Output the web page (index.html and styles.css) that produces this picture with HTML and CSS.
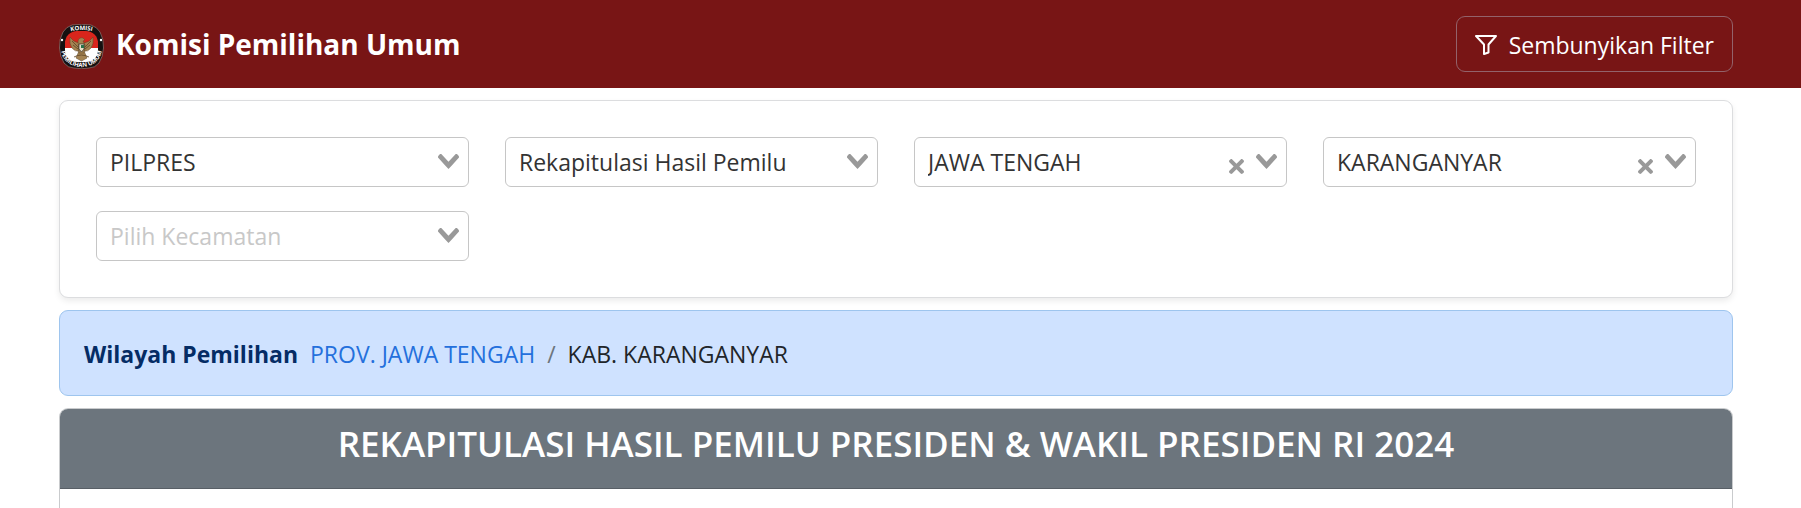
FILE: index.html
```html
<!doctype html>
<html lang="id">
<head>
    <meta charset="UTF-8">
    <meta name="viewport" content="width=device-width, initial-scale=1.0">
    <title>Komisi Pemilihan Umum</title>
    <link rel="stylesheet" href="styles.css">
</head>
<body>
    <!-- shared icons -->
    <svg class="sprite" aria-hidden="true">
        <symbol id="icon-open" viewBox="0 0 14 10">
            <path d="M9.211364 7.59931l4.48338-4.867229c.407008-.441854.407008-1.158247 0-1.60046l-.73712-.80023c-.407008-.441854-1.066904-.441854-1.474243 0L7 5.198617 2.51662.33139c-.407008-.441853-1.066904-.441853-1.474243 0l-.737121.80023c-.407008.441854-.407008 1.158248 0 1.600461l4.48338 4.867228L7 10l2.211364-2.40069z"/>
        </symbol>
        <symbol id="icon-clear" viewBox="0 0 10 10">
            <path d="M6.895455 5l2.842897-2.842898c.348864-.348863.348864-.914488 0-1.263636L9.106534.261648c-.348864-.348864-.914489-.348864-1.263636 0L5 3.104545 2.157102.261648c-.348863-.348864-.914488-.348864-1.263636 0L.261648.893466c-.348864.348864-.348864.914489 0 1.263636L3.104545 5 .261648 7.842898c-.348864.348863-.348864.914488 0 1.263636l.631818.631818c.348864.348864.914773.348864 1.263636 0L5 6.895455l2.842898 2.842897c.348863.348864.914772.348864 1.263636 0l.631818-.631818c.348864-.348864.348864-.914489 0-1.263636L6.895455 5z"/>
        </symbol>
    </svg>

    <header class="navbar">
        <a class="brand" href="#">
            <svg class="brand-logo" viewBox="0 0 45 45" aria-hidden="true">
                <defs>
                    <clipPath id="shield"><rect x="6" y="7" width="33" height="31" rx="12"/></clipPath>
                    <path id="arc-top" d="M6 9 Q22.500 3 39 9"/>
                    <path id="arc-bottom" d="M2 25 C3 49 42 49 43 25"/>
                </defs>
                <path d="M13 1 Q22.500 -.5 32 1 Q38 3 41 8 Q45 15 44.500 24 Q44 33 40 39 Q36 44 30 44 Q22.500 45.500 15 44 Q9 44 5 39 Q1 33 .5 24 Q0 15 4 8 Q7 3 13 1z" fill="#151010" stroke="#a58c84" stroke-width=".6"/>
                <g clip-path="url(#shield)">
                    <path fill="#d9251c" d="M0 0h45v24H0z"/>
                    <path fill="#fff" d="M0 24h45v21H0z"/>
                </g>
                <!-- garuda -->
                <g fill="#a48352" stroke="#5d4426" stroke-width=".5">
                    <path d="M20 19 Q14 18 11 13 Q10 20 13 24 Q16 28 20 27z"/>
                    <path d="M25 19 Q31 18 34 13 Q35 20 32 24 Q29 28 25 27z"/>
                    <path d="M20 27 L17 34 L22.500 37 L28 34 L25 27z"/>
                    <path d="M19 17 Q20 13 24 14 L26 16 L24 17 L26 21 L25 29 H20z"/>
                </g>
                <path d="M13 17l6 6M14 21l5 4M32 17l-6 6M31 21l-5 4M15 33q7-4 15 0" fill="none" stroke="#5d4426" stroke-width=".8"/>
                <path d="M20 20h5v5l-2.500 3-2.500-3z" fill="#e7dcc4" stroke="#222" stroke-width=".6"/>
                <path d="M22 21h3v3h-3z" fill="#28724b"/>
                <circle cx="3" cy="16" r="1.200" fill="#fff"/>
                <circle cx="42" cy="16" r="1.200" fill="#fff"/>
                <text class="logo-text"><textPath href="#arc-top" startOffset="50%">KOMISI</textPath></text>
                <text class="logo-text"><textPath href="#arc-bottom" startOffset="50%">PEMILIHAN UMUM</textPath></text>
            </svg>
            <span>Komisi Pemilihan Umum</span>
        </a>
        <button class="btn-filter" type="button">
            <svg class="icon-funnel" viewBox="0 0 22 20" aria-hidden="true">
                <path d="M1 1H21L13.500 9.500V17.500L9 19V9.500z"/>
            </svg>
            <span>Sembunyikan Filter</span>
        </button>
    </header>

    <main class="container">
        <form class="card filters">
            <div class="field">
                <select aria-label="Jenis pemilihan">
                    <option>PILPRES</option>
                </select>
                <svg class="icon-open"><use href="#icon-open"/></svg>
            </div>
            <div class="field">
                <select aria-label="Jenis data">
                    <option>Rekapitulasi Hasil Pemilu</option>
                </select>
                <svg class="icon-open"><use href="#icon-open"/></svg>
            </div>
            <div class="field">
                <select aria-label="Provinsi">
                    <option>JAWA TENGAH</option>
                </select>
                <button class="btn-clear" type="button" aria-label="Hapus provinsi"><svg><use href="#icon-clear"/></svg></button>
                <svg class="icon-open"><use href="#icon-open"/></svg>
            </div>
            <div class="field">
                <select aria-label="Kabupaten/Kota">
                    <option>KARANGANYAR</option>
                </select>
                <button class="btn-clear" type="button" aria-label="Hapus kabupaten"><svg><use href="#icon-clear"/></svg></button>
                <svg class="icon-open"><use href="#icon-open"/></svg>
            </div>
            <div class="field">
                <select class="is-empty" aria-label="Kecamatan">
                    <option>Pilih Kecamatan</option>
                </select>
                <svg class="icon-open"><use href="#icon-open"/></svg>
            </div>
        </form>

        <nav class="region" aria-label="Wilayah Pemilihan">
            <strong>Wilayah Pemilihan</strong>
            <a href="#">PROV. JAWA TENGAH</a>
            <span class="divider">/</span>
            <span>KAB. KARANGANYAR</span>
        </nav>

        <section class="card result">
            <h1 class="result-title">REKAPITULASI HASIL PEMILU PRESIDEN &amp; WAKIL PRESIDEN RI 2024</h1>
            <div class="result-body"></div>
        </section>
    </main>
</body>
</html>
```
FILE: styles.css
```css
* {
    box-sizing: border-box;
}
body {
    margin: 0;
    background: #fff;
    color: #212529;
    font-family: "Open Sans", "Noto Sans", sans-serif;
    font-size: 23px;
    line-height: 36px;
}
.sprite {
    display: none;
}

/* header */
.navbar {
    display: flex;
    justify-content: space-between;
    align-items: center;
    height: 88px;
    padding: 0 68px 0 59px;
    background: #781515;
}
.brand {
    display: flex;
    align-items: center;
    gap: 12px;
    color: #fff;
    font-size: 28px;
    font-weight: 700;
    text-decoration: none;
}
.brand-logo {
    width: 45px;
    height: 45px;
    margin-top: 4px;
}
.logo-text {
    fill: #fff;
    font-size: 6px;
    font-weight: 700;
    text-anchor: middle;
}
.btn-filter {
    display: flex;
    align-items: center;
    gap: 12px;
    height: 56px;
    padding: 2px 18px 0;
    border: 1px solid #93626a;
    border-radius: 9px;
    background: none;
    color: #fff;
    font: inherit;
    cursor: pointer;
}
.icon-funnel {
    width: 22px;
    height: 20px;
    fill: none;
    stroke: #fff;
    stroke-width: 2;
    stroke-linejoin: round;
}

.container {
    display: flex;
    flex-direction: column;
    gap: 12px;
    padding: 12px 68px 0 59px;
}
.card {
    border: 1px solid #dcdddf;
    border-radius: 9px;
    background: #fff;
}

/* filters */
.filters {
    display: grid;
    grid-template-columns: repeat(4, 1fr);
    gap: 24px 36px;
    padding: 36px;
    box-shadow: 0 3px 6px rgba(0, 0, 0, .08);
}
.field {
    position: relative;
}
.field select {
    display: block;
    width: 100%;
    height: 50px;
    padding: 0 60px 0 13px;
    border: 1px solid #c6c6c6;
    border-radius: 6px;
    background: #fff;
    color: #333;
    font: inherit;
    appearance: none;
}
.field .is-empty {
    color: #c8c8c8;
}
/* icons lie over the select */
.icon-open,
.btn-clear {
    position: absolute;
    fill: #999;
}
.icon-open {
    top: 17px;
    right: 10px;
    width: 21px;
    height: 15px;
    pointer-events: none;
}
.btn-clear {
    top: 22px;
    right: 43px;
    width: 15px;
    height: 15px;
    padding: 0;
    border: 0;
    background: none;
    cursor: pointer;
}
.btn-clear svg {
    display: block;
    width: 15px;
    height: 15px;
}

/* breadcrumb */
.region {
    display: flex;
    align-items: center;
    gap: 12px;
    padding: 25px 24px 23px;
    border: 1px solid #9ec5ee;
    border-radius: 9px;
    background: #cfe2ff;
}
.region strong {
    color: #052c65;
}
.region a {
    color: #2470dc;
    text-decoration: none;
}
.region .divider {
    color: #6c757d;
}

/* result */
.result {
    border-color: #c9cbcd;
    border-bottom: 0;
    border-radius: 9px 9px 0 0;
}
.result-title {
    margin: 0;
    padding: 13px 24px 22px;
    border-bottom: 1px solid #585f66;
    border-radius: 8px 8px 0 0;
    background: #6c757d;
    color: #fff;
    font-size: 35px;
    font-weight: 600;
    line-height: 44px;
    text-align: center;
}
.result-body {
    min-height: 19px;
}
```
